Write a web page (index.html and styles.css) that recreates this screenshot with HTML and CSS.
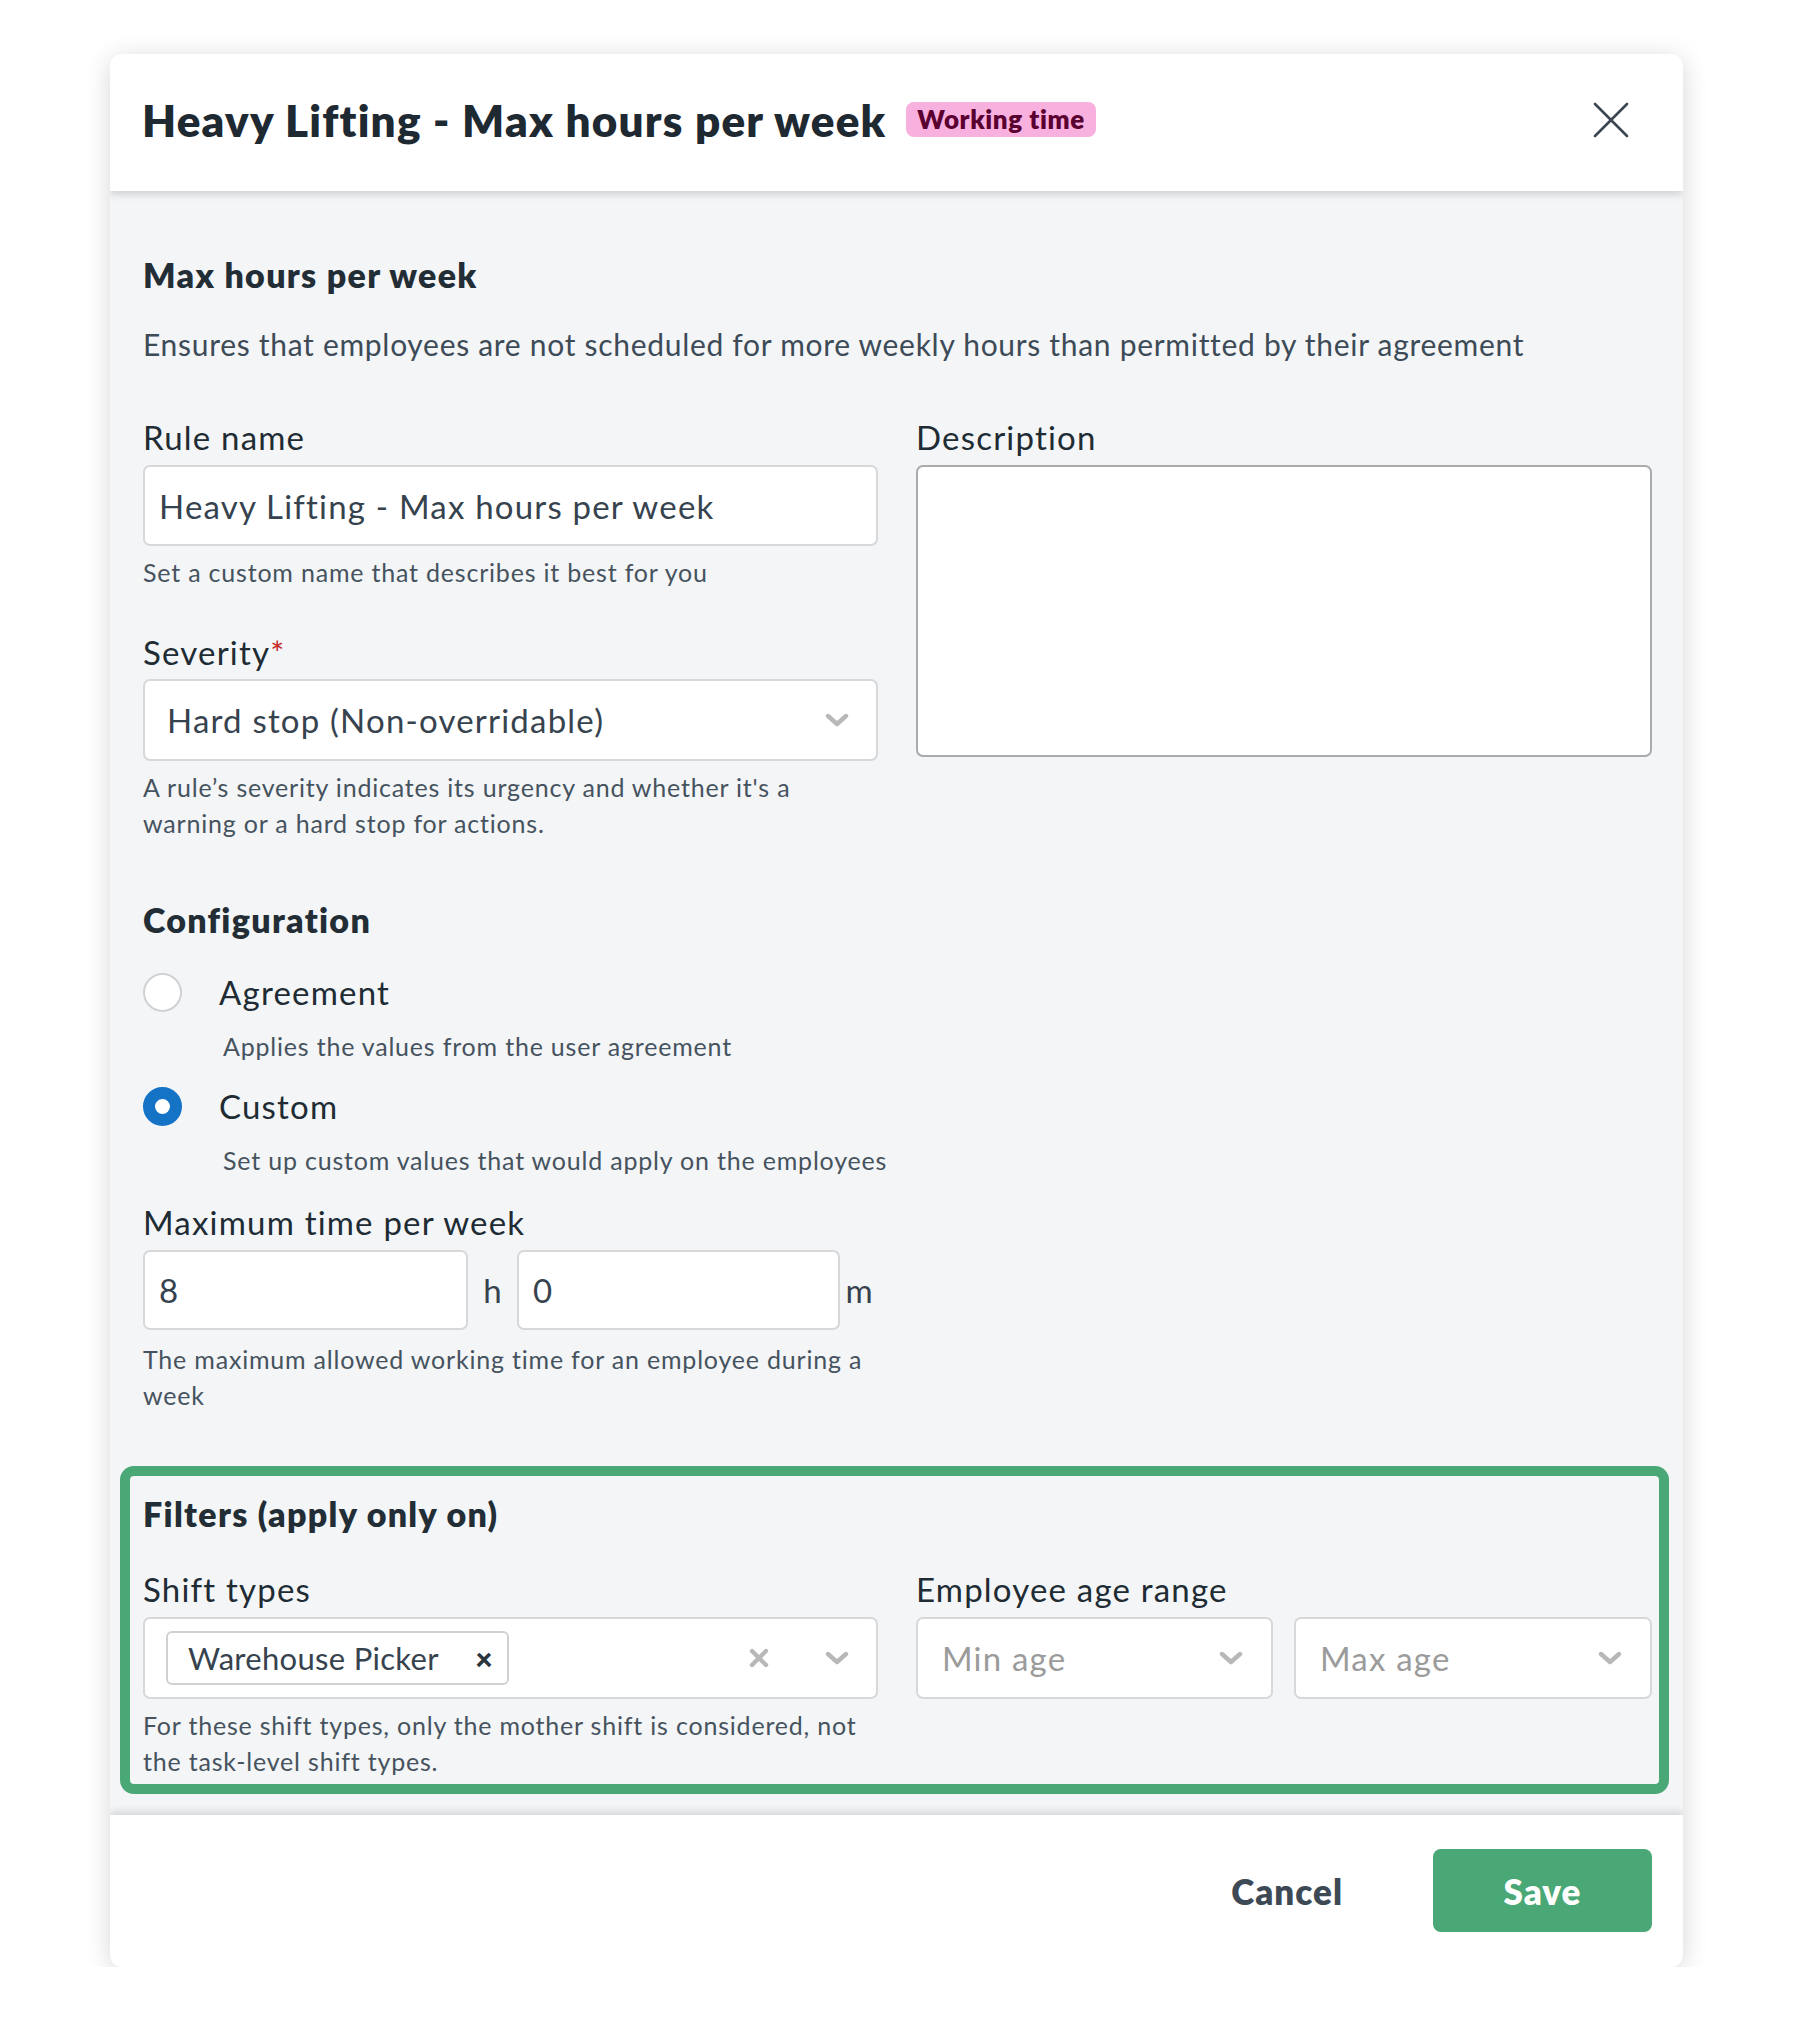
FILE: index.html
```html
<!DOCTYPE html>
<html lang="en">
<head>
<meta charset="utf-8">
<title>Heavy Lifting - Max hours per week</title>
<link rel="stylesheet" href="styles.css">
</head>
<body>
<div class="modal">
  <header class="modal-header">
    <h1 class="title">Heavy Lifting - Max hours per week</h1>
    <span class="badge">Working time</span>
    <button class="close" aria-label="Close">
      <svg viewBox="0 0 36 36" width="36" height="36"><path d="M2 2L34 34M34 2L2 34" stroke="#3b4650" stroke-width="2.6" fill="none" stroke-linecap="round"/></svg>
    </button>
  </header>

  <main class="modal-body">
    <h2 class="section-title">Max hours per week</h2>
    <p class="lead">Ensures that employees are not scheduled for more weekly hours than permitted by their agreement</p>

    <div class="two-col">
      <div class="col">
        <label class="label">Rule name</label>
        <div class="input"><span class="value">Heavy Lifting - Max hours per week</span></div>
        <p class="help help-1">Set a custom name that describes it best for you</p>

        <label class="label label-sev">Severity<span class="req">*</span></label>
        <div class="input select">
          <span class="value">Hard stop (Non-overridable)</span>
          <svg class="chev" viewBox="0 0 24 14" width="24" height="14"><path d="M3 3L12 11L21 3" stroke="#b8b8b8" stroke-width="4.4" fill="none" stroke-linecap="round" stroke-linejoin="round"/></svg>
        </div>
        <p class="help help-1">A rule’s severity indicates its urgency and whether it's a warning or a hard stop for actions.</p>
      </div>
      <div class="col">
        <label class="label">Description</label>
        <div class="textarea"></div>
      </div>
    </div>

    <h2 class="section-title config-title">Configuration</h2>
    <div class="radio-row first">
      <span class="radio"></span>
      <span class="radio-label">Agreement</span>
    </div>
    <p class="help radio-help">Applies the values from the user agreement</p>
    <div class="radio-row">
      <span class="radio checked"></span>
      <span class="radio-label">Custom</span>
    </div>
    <p class="help radio-help">Set up custom values that would apply on the employees</p>

    <div class="col time-col">
      <label class="label label-time">Maximum time per week</label>
      <div class="time-row">
        <div class="input"><span class="value">8</span></div>
        <span class="unit">h</span>
        <div class="input"><span class="value">0</span></div>
        <span class="unit">m</span>
      </div>
      <p class="help help-1">The maximum allowed working time for an employee during a week</p>
    </div>

    <section class="filters">
      <h2 class="section-title">Filters (apply only on)</h2>
      <div class="two-col filters-row">
        <div class="col">
          <label class="label">Shift types</label>
          <div class="input select multi">
            <span class="chip">Warehouse Picker<span class="chip-x">×</span></span>
            <svg class="clear" viewBox="0 0 20 20" width="20" height="20"><path d="M3 3L17 17M17 3L3 17" stroke="#b8b8b8" stroke-width="4.4" fill="none" stroke-linecap="round"/></svg>
            <svg class="chev" viewBox="0 0 24 14" width="24" height="14"><path d="M3 3L12 11L21 3" stroke="#b8b8b8" stroke-width="4.4" fill="none" stroke-linecap="round" stroke-linejoin="round"/></svg>
          </div>
          <p class="help help-1">For these shift types, only the mother shift is considered, not the task-level shift types.</p>
        </div>
        <div class="col">
          <label class="label">Employee age range</label>
          <div class="age-row">
            <div class="input select">
              <span class="placeholder">Min age</span>
              <svg class="chev" viewBox="0 0 24 14" width="24" height="14"><path d="M3 3L12 11L21 3" stroke="#b8b8b8" stroke-width="4.4" fill="none" stroke-linecap="round" stroke-linejoin="round"/></svg>
            </div>
            <div class="input select">
              <span class="placeholder">Max age</span>
              <svg class="chev" viewBox="0 0 24 14" width="24" height="14"><path d="M3 3L12 11L21 3" stroke="#b8b8b8" stroke-width="4.4" fill="none" stroke-linecap="round" stroke-linejoin="round"/></svg>
            </div>
          </div>
        </div>
      </div>
    </section>
  </main>

  <footer class="modal-footer">
    <button class="btn-cancel">Cancel</button>
    <button class="btn-save">Save</button>
  </footer>
</div>
</body>
</html>
```

FILE: styles.css
```css
* { box-sizing: border-box; }

html, body {
  margin: 0;
  padding: 0;
  background: #ffffff;
}

body {
  font-family: Lato, "Noto Sans", "Liberation Sans", sans-serif;
  color: #202b33;
  padding: 54px 0 0 110px;
}

.modal {
  width: 1573px;
  height: 1913px;
  border-radius: 12px;
  background: #f3f5f7;
  box-shadow: 0 4px 26px rgba(0, 0, 0, 0.16);
  display: flex;
  flex-direction: column;
  overflow: hidden;
}

/* Header */
.modal-header {
  height: 137px;
  flex: none;
  background: #ffffff;
  display: flex;
  align-items: center;
  padding: 0 54px 6px 33px;
  position: relative;
  z-index: 2;
  box-shadow: 0 3px 8px rgba(0, 0, 0, 0.16);
}

.title {
  margin: 0 0 0 -1px;
  font-size: 44px;
  font-weight: 800;
  color: #1e2932;
  letter-spacing: 1.2px;
  line-height: 1;
}

.badge {
  margin-left: 20px;
  background: #f8b0df;
  color: #5a0030;
  font-weight: 800;
  font-size: 26px;
  letter-spacing: 0.6px;
  line-height: 35px;
  height: 35px;
  padding: 0 11px;
  border-radius: 8px;
}

.close {
  margin-left: auto;
  border: 0;
  background: none;
  padding: 0;
  width: 36px;
  height: 36px;
  display: flex;
}

/* Body */
.modal-body {
  flex: 1;
  padding: 62px 31px 0 33px;
  position: relative;
  z-index: 1;
}

.section-title {
  margin: 0;
  font-size: 34px;
  letter-spacing: 1.3px;
  line-height: 44px;
  font-weight: 800;
  color: #222d35;
}

.lead {
  margin: 25px 0 0;
  font-size: 30px;
  letter-spacing: 0.7px;
  line-height: 44px;
  color: #3d4b57;
}

.two-col {
  display: grid;
  grid-template-columns: 735px 736px;
  column-gap: 38px;
  margin-top: 49px;
}

.col {
  display: flex;
  flex-direction: column;
  align-items: stretch;
}

.label {
  display: block;
  font-size: 33px;
  letter-spacing: 1.2px;
  line-height: 44px;
  color: #202b33;
  margin-bottom: 6px;
}

.req { color: #c62828; }

.label-sev { margin-top: 40px; margin-bottom: 5px; }

.input {
  height: 81px;
  background: #ffffff;
  border: 2px solid #d6d8da;
  border-radius: 7px;
  display: flex;
  align-items: center;
  padding: 0 14px;
  font-size: 33px;
  letter-spacing: 1.2px;
  color: #36434e;
}

.select {
  padding: 0 27px 0 22px;
  height: 82px;
}

.select .chev { margin-left: auto; flex: none; }

.value { white-space: nowrap; }

.placeholder { color: #9b9b9b; }

.textarea {
  height: 292px;
  background: #ffffff;
  border: 2px solid #a9abad;
  border-radius: 7px;
}

.help {
  margin: 0;
  font-size: 25px;
  letter-spacing: 0.8px;
  line-height: 36px;
  color: #46535e;
}

.help-1 { margin-top: 8px; }

/* Configuration */
.config-title { margin-top: 57px; }

.radio-row {
  display: flex;
  align-items: center;
  height: 44px;
  margin-top: 20px;
}

.radio-row.first { margin-top: 28px; }

.radio {
  width: 39px;
  height: 39px;
  border-radius: 50%;
  background: #ffffff;
  border: 2px solid #cfd1d3;
  flex: none;
}

.radio.checked {
  border: 12px solid #1473c4;
}

.radio-label {
  margin-left: 37px;
  font-size: 33px;
  letter-spacing: 1.2px;
  color: #202b33;
}

.radio-help {
  margin: 14px 0 0 80px;
}

.time-col {
  width: 735px;
}

.label-time { margin-top: 22px; }

.time-row {
  display: grid;
  grid-template-columns: 325px 49px 323px 38px;
  align-items: center;
}

.time-row .input { height: 80px; }

.unit {
  text-align: center;
  font-size: 33px;
  color: #36434e;
}

.time-col .help-1 { margin-top: 11px; }

/* Filters */
.filters {
  margin: 53px -17px 21px -23px;
  border: 10px solid #4aa776;
  border-radius: 14px;
  padding: 16px 7px 5px 13px;
}

.filters-row { margin-top: 31px; }

.multi { padding-left: 21px; }

.chip {
  display: inline-flex;
  align-items: center;
  height: 54px;
  border: 2px solid #cfd1d3;
  border-radius: 6px;
  padding: 0 0 0 20px;
  width: 343px;
  color: #36434e;
  font-size: 31px;
  letter-spacing: 0.3px;
  white-space: nowrap;
}

.chip-x {
  margin-left: auto;
  margin-right: 14px;
  font-weight: 800;
  font-size: 30px;
  color: #2a353e;
}

.clear {
  margin-left: auto;
  flex: none;
}

.multi .chev { margin-left: 56px; }

.age-row {
  display: grid;
  grid-template-columns: 357px 358px;
  column-gap: 21px;
}

.age-row .select { padding: 0 28px 0 24px; }

/* Footer */
.modal-footer {
  height: 155px;
  flex: none;
  background: #ffffff;
  display: flex;
  align-items: center;
  justify-content: flex-end;
  padding: 0 31px 4px 0;
  position: relative;
  z-index: 2;
  box-shadow: 0 -3px 8px rgba(0, 0, 0, 0.14);
}

.btn-cancel {
  border: 0;
  background: none;
  font-family: inherit;
  font-size: 35px;
  letter-spacing: 1px;
  font-weight: 800;
  color: #3d4a55;
  padding: 0;
  margin-right: 90px;
}

.btn-save {
  width: 219px;
  height: 83px;
  border: 0;
  border-radius: 8px;
  background: #4aa776;
  color: #ffffff;
  font-family: inherit;
  font-size: 35px;
  letter-spacing: 1px;
  font-weight: 800;
}
```
